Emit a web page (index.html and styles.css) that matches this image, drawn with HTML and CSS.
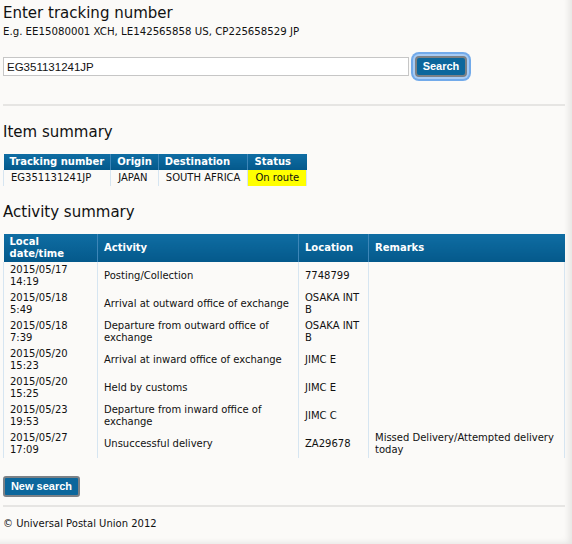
FILE: index.html
```html
<!DOCTYPE html>
<html lang="en">
<head>
<meta charset="utf-8">
<title>Track and trace</title>
<link rel="stylesheet" href="styles.css">
</head>
<body>
<div class="page">
  <section class="search">
    <h2 class="title title-first">Enter tracking number</h2>
    <p class="hint">E.g. EE15080001 XCH, LE142565858 US, CP225658529 JP</p>
    <form class="search-form">
      <input class="search-input" type="text" value="EG351131241JP">
      <button type="button" class="btn btn-focus">Search</button>
    </form>
  </section>
  <hr class="rule rule-top">

  <h2 class="title">Item summary</h2>
  <table class="grid item-table">
    <thead>
      <tr><th>Tracking number</th><th>Origin</th><th>Destination</th><th>Status</th></tr>
    </thead>
    <tbody>
      <tr><td>EG351131241JP</td><td>JAPAN</td><td>SOUTH AFRICA</td><td class="status">On route</td></tr>
    </tbody>
  </table>

  <h2 class="title">Activity summary</h2>
  <table class="grid activity-table">
    <colgroup>
      <col class="c-date"><col class="c-activity"><col class="c-location"><col class="c-remarks">
    </colgroup>
    <thead>
      <tr><th>Local date/time</th><th>Activity</th><th>Location</th><th>Remarks</th></tr>
    </thead>
    <tbody>
      <tr><td>2015/05/17 14:19</td><td>Posting/Collection</td><td>7748799</td><td></td></tr>
      <tr><td>2015/05/18 5:49</td><td>Arrival at outward office of exchange</td><td>OSAKA INT B</td><td></td></tr>
      <tr><td>2015/05/18 7:39</td><td>Departure from outward office of exchange</td><td>OSAKA INT B</td><td></td></tr>
      <tr><td>2015/05/20 15:23</td><td>Arrival at inward office of exchange</td><td>JIMC E</td><td></td></tr>
      <tr><td>2015/05/20 15:25</td><td>Held by customs</td><td>JIMC E</td><td></td></tr>
      <tr><td>2015/05/23 19:53</td><td>Departure from inward office of exchange</td><td>JIMC C</td><td></td></tr>
      <tr><td>2015/05/27 17:09</td><td>Unsuccessful delivery</td><td>ZA29678</td><td>Missed Delivery/Attempted delivery today</td></tr>
    </tbody>
  </table>

  <button type="button" class="btn btn-new">New search</button>
  <hr class="rule rule-bottom">
  <p class="footer">© Universal Postal Union 2012</p>
</div>
</body>
</html>
```
FILE: styles.css
```css
html, body {
  margin: 0;
  padding: 0;
}
body {
  background: #fbfaf8;
  color: #111;
  font-family: "DejaVu Sans", Verdana, sans-serif;
  font-size: 10px;
  min-height: 100vh;
  box-sizing: border-box;
  box-shadow: inset -6px -4px 6px -3px rgba(0, 0, 0, 0.09);
}
.page {
  width: 562px;
  padding: 0 0 1px 3px;
}
.title {
  font-size: 15px;
  line-height: 18px;
  font-weight: normal;
  margin: 17px 0 13px;
  color: #111;
}
.title-first {
  margin: 4px 0 0;
}
.hint {
  font-size: 10.2px;
  line-height: 13px;
  margin: 2.5px 0 0;
}
.search-form {
  display: flex;
  align-items: center;
  margin: 18.5px 0 0;
  height: 21px;
}
.search-input {
  box-sizing: border-box;
  width: 406px;
  height: 19px;
  border: 1px solid #c6c6c6;
  background: #fff;
  padding: 0 3px;
  font-family: "Liberation Sans", Arial, sans-serif;
  font-size: 11.5px;
  color: #111;
  margin: 0;
  outline: none;
}
.btn {
  box-sizing: border-box;
  height: 21px;
  border: 2px solid #7c8186;
  border-radius: 3px;
  background: #0c679c;
  color: #fff;
  font-family: "Liberation Sans", Arial, sans-serif;
  font-weight: bold;
  font-size: 11px;
  line-height: 17px;
  padding: 0 6px;
  margin: 0;
  cursor: pointer;
}
.btn-focus {
  margin-left: 6px;
  width: 52px;
  padding: 0;
  box-shadow: 0 0 0 2px #a7cbf4, 0 0 0 4px #72aaea;
  border-radius: 4px;
}
.btn-new {
  display: block;
  width: 77px;
  padding: 0;
  margin-top: 18px;
}
.rule {
  border: 0;
  height: 2px;
  background: #e6e5e3;
  margin: 0;
  width: 562px;
}
.rule-top {
  margin-top: 27px;
}
.rule-bottom {
  margin-top: 8px;
}
.footer {
  font-size: 10px;
  line-height: 12px;
  margin: 10.5px 0 0;
}
.grid {
  border-collapse: collapse;
  font-size: 10px;
  line-height: 12px;
}
.grid th {
  background: linear-gradient(#0f6da3, #04598b);
  color: #fff;
  font-weight: bold;
  text-align: left;
  padding: 2px 7px;
  vertical-align: middle;
  border-left: 1px solid #3d86b8;
}
.grid th:first-child {
  border-left: 0;
}
.grid td {
  padding: 2px 6px;
  vertical-align: middle;
  border-left: 1px solid #d6e5f1;
  border-right: 1px solid #d6e5f1;
  color: #111;
}
.item-table th {
  padding: 2px 6px;
}
.item-table td {
  padding: 2px 7px;
}
.status {
  background: #ffff00;
}
.activity-table {
  table-layout: fixed;
  width: 561px;
}
.activity-table th, .activity-table td {
  padding-left: 6px;
  padding-right: 6px;
}
.c-date { width: 94px; }
.c-activity { width: 201px; }
.c-location { width: 70px; }
.c-remarks { width: 196px; }
```
